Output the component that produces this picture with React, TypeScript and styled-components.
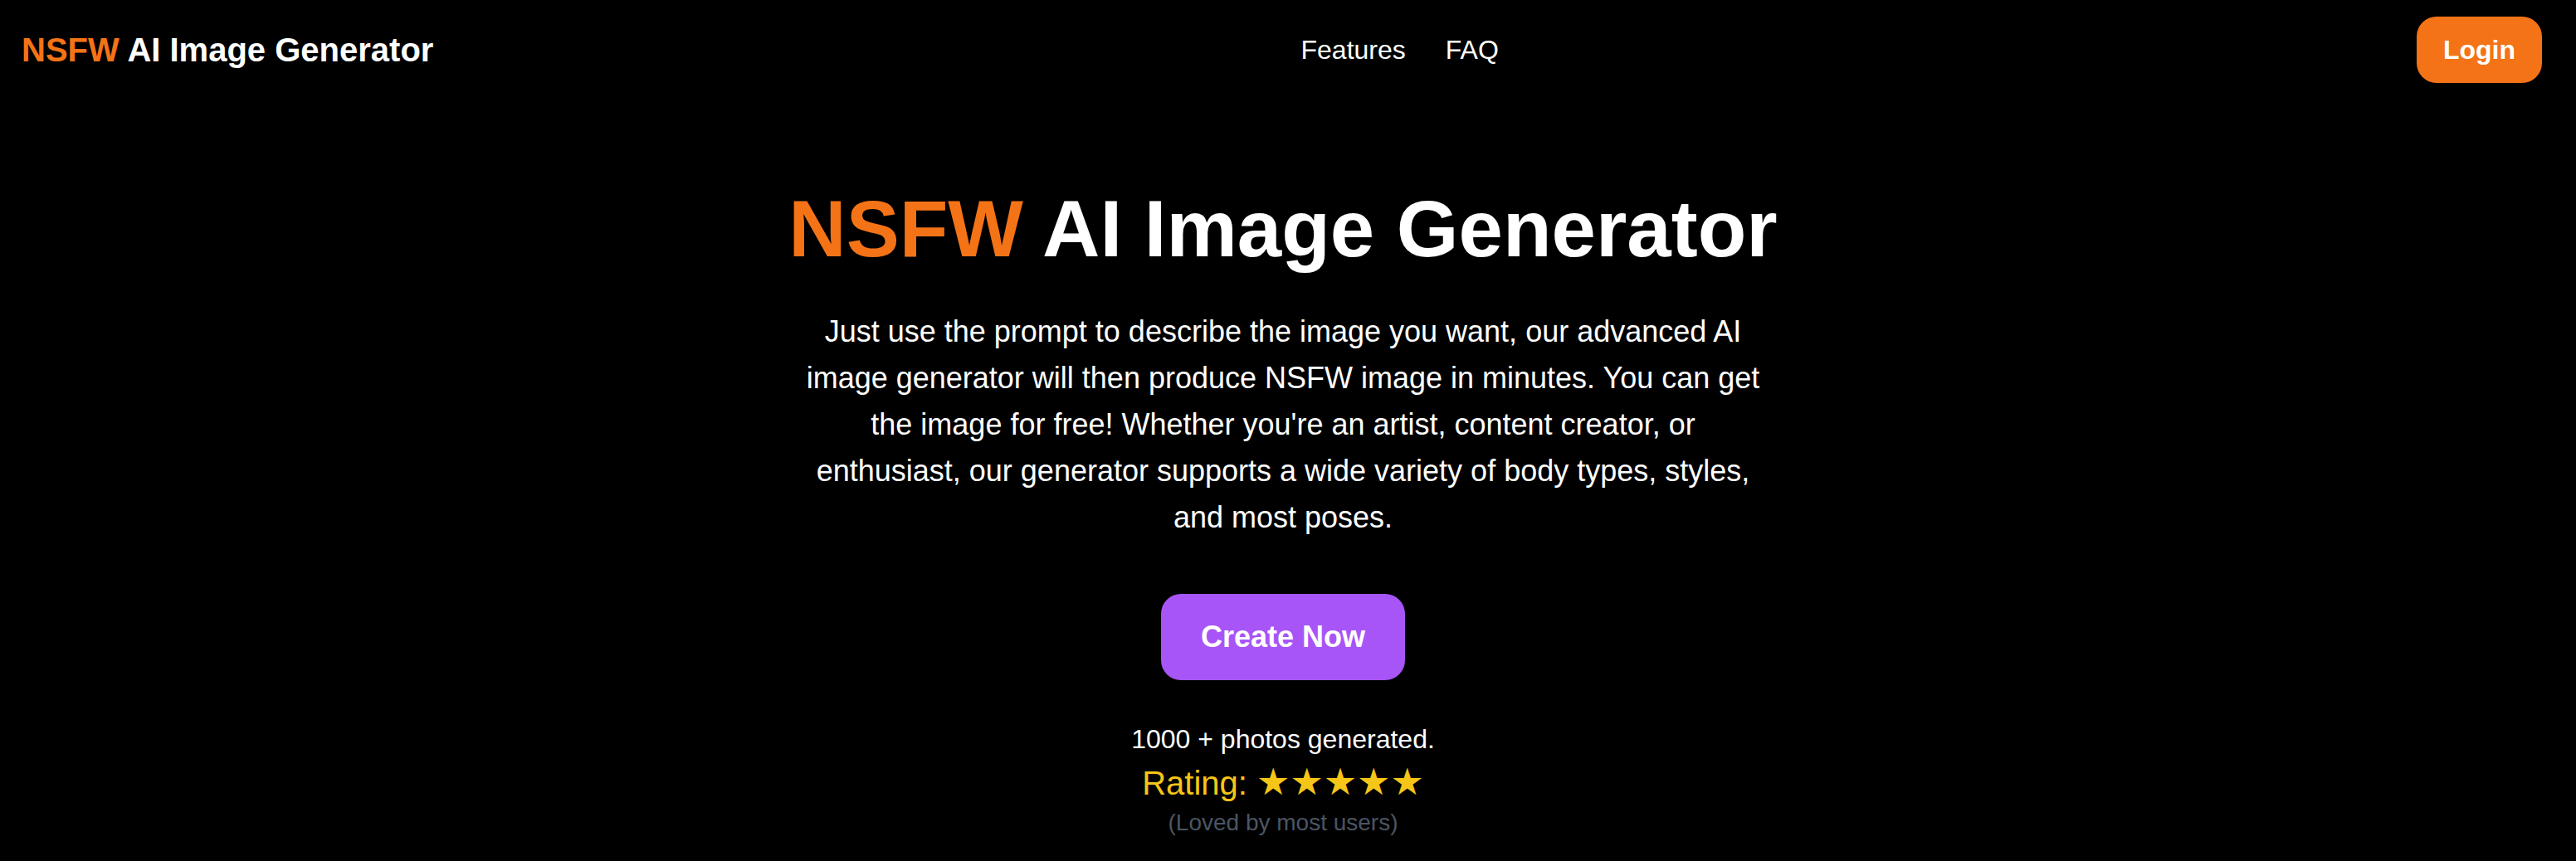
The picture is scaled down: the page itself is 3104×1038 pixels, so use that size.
import React from 'react'
import styled, { createGlobalStyle } from 'styled-components'

const GlobalStyle = createGlobalStyle`
  html, body {
    margin: 0;
    padding: 0;
    background: #000000;
  }
  body {
    font-family: 'Liberation Sans', Arial, sans-serif;
    color: #ffffff;
  }
  * {
    box-sizing: border-box;
  }
`

const ORANGE = '#f47316'

const Page = styled.div`
  width: calc(100% - 12px);
  min-height: 1038px;
  background: #000000;
`

const Header = styled.header`
  height: 120px;
  padding: 0 29px 0 26px;
  display: flex;
  align-items: center;
  justify-content: space-between;
`

const Logo = styled.a`
  font-size: 40px;
  line-height: 56px;
  font-weight: 700;
  color: #ffffff;
  text-decoration: none;
`

const Accent = styled.span`
  color: ${ORANGE};
`

const Nav = styled.nav`
  display: flex;
  gap: 48px;
  margin-right: 61px;
`

const NavLink = styled.a`
  font-size: 32px;
  line-height: 48px;
  color: #ffffff;
  text-decoration: none;
`

const LoginButton = styled.button`
  height: 80px;
  padding: 0 32px;
  border: none;
  border-radius: 24px;
  background: ${ORANGE};
  color: #ffffff;
  font-family: inherit;
  font-size: 32px;
  line-height: 48px;
  font-weight: 700;
  cursor: pointer;
`

const Hero = styled.main`
  padding-top: 108px;
  display: flex;
  flex-direction: column;
  align-items: center;
  text-align: center;
`

const Title = styled.h1`
  margin: 0 0 48px;
  font-size: 96px;
  line-height: 96px;
  font-weight: 700;
`

const Lead = styled.p`
  margin: 0;
  max-width: 1152px;
  font-size: 36px;
  line-height: 56px;
`

const CreateButton = styled.button`
  margin-top: 64px;
  height: 104px;
  padding: 0 48px;
  border: none;
  border-radius: 24px;
  background: #a855f7;
  color: #ffffff;
  font-family: inherit;
  font-size: 36px;
  line-height: 56px;
  font-weight: 700;
  cursor: pointer;
`

const Stats = styled.div`
  margin-top: 47px;
  display: flex;
  flex-direction: column;
  align-items: center;
`

const Generated = styled.p`
  margin: 0;
  font-size: 32px;
  line-height: 48px;
`

const Rating = styled.p`
  margin: 0;
  font-size: 40px;
  line-height: 56px;
  color: #f5c518;
`

const Stars = styled.span`
  font-family: 'DejaVu Sans', sans-serif;
  font-size: 45px;
`

const Loved = styled.p`
  margin: 0;
  font-size: 28px;
  line-height: 40px;
  color: #4b5563;
`

export default function App() {
  return (
    <Page>
      <GlobalStyle />
      <Header>
        <Logo href="#">
          <Accent>NSFW</Accent> AI Image Generator
        </Logo>
        <Nav>
          <NavLink href="#features">Features</NavLink>
          <NavLink href="#faq">FAQ</NavLink>
        </Nav>
        <LoginButton>Login</LoginButton>
      </Header>

      <Hero>
        <Title>
          <Accent>NSFW</Accent> AI Image Generator
        </Title>
        <Lead>
          Just use the prompt to describe the image you want, our advanced AI image generator will
          then produce NSFW image in minutes. You can get the image for free! Whether you're an
          artist, content creator, or enthusiast, our generator supports a wide variety of body
          types, styles, and most poses.
        </Lead>
        <CreateButton>Create Now</CreateButton>
        <Stats>
          <Generated>1000 + photos generated.</Generated>
          <Rating>
            Rating: <Stars>★★★★★</Stars>
          </Rating>
          <Loved>(Loved by most users)</Loved>
        </Stats>
      </Hero>
    </Page>
  )
}
